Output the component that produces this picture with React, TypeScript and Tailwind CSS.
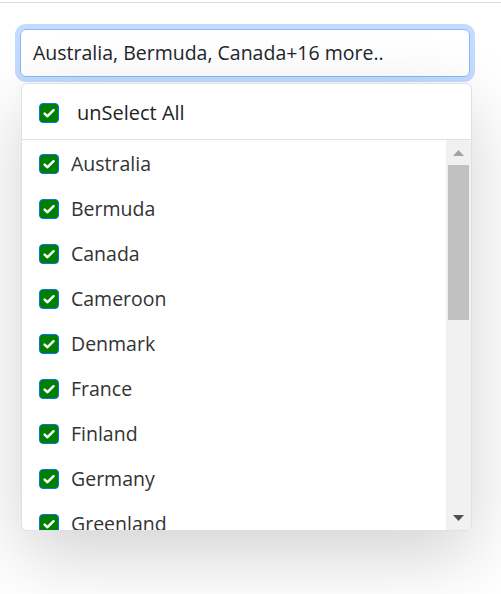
import React from 'react';

const countries = [
  'Australia',
  'Bermuda',
  'Canada',
  'Cameroon',
  'Denmark',
  'France',
  'Finland',
  'Germany',
  'Greenland',
];

const Check = () => (
  <span className="w-5 h-5 shrink-0 rounded-[4px] bg-[#008000] border border-[#0d6efd] flex items-center justify-center">
    <svg width="14" height="14" viewBox="0 0 16 16" fill="none">
      <path d="M3 8.6l3.3 3.1L13.2 4.8" stroke="#fff" strokeWidth="2.8" strokeLinecap="round" strokeLinejoin="round" />
    </svg>
  </span>
);

export default function App() {
  return (
    <div className="w-[501px] h-[594px] bg-white overflow-hidden font-['Open_Sans',sans-serif] text-[#212529]">
      <div className="h-[3px] border-b border-[#dcdcdc]" />
      <div className="px-5 pt-[26px]">
        <div className="h-12 w-[450px] rounded-[6px] border border-[#86b7fe] shadow-[0_0_0_5px_rgba(13,110,253,0.25)] pl-3 flex items-center text-[19.5px]">
          Australia, Bermuda, Canada+16 more..
        </div>
        <div className="mt-[6px] ml-px w-[451px] bg-white border border-[#dee2e6] rounded-[6px] shadow-[0_24px_72px_rgba(0,0,0,0.18)] overflow-hidden">
          <div className="h-14 flex items-center gap-[18px] pl-[17px] pt-[3px] border-b border-[#dee2e6] text-[20px]">
            <Check />
            <span>unSelect All</span>
          </div>
          <div className="h-[390px] flex">
            <div className="flex-1 overflow-hidden pt-px">
              {countries.map((c) => (
                <div key={c} className="h-[45px] flex items-center gap-3 pl-[17px] text-[19.5px] text-[#333]">
                  <Check />
                  <span>{c}</span>
                </div>
              ))}
            </div>
            <div className="w-[25px] bg-[#f1f1f1] flex flex-col items-center">
              <div className="h-[25px] flex items-center justify-center">
                <svg width="11" height="6" viewBox="0 0 11 6"><path d="M5.5 0L11 6H0z" fill="#a3a3a3" /></svg>
              </div>
              <div className="w-[21px] h-[155px] bg-[#c1c1c1]" />
              <div className="flex-1" />
              <div className="h-[25px] flex items-center justify-center">
                <svg width="11" height="6" viewBox="0 0 11 6"><path d="M0 0h11L5.5 6z" fill="#505050" /></svg>
              </div>
            </div>
          </div>
        </div>
      </div>
    </div>
  );
}
